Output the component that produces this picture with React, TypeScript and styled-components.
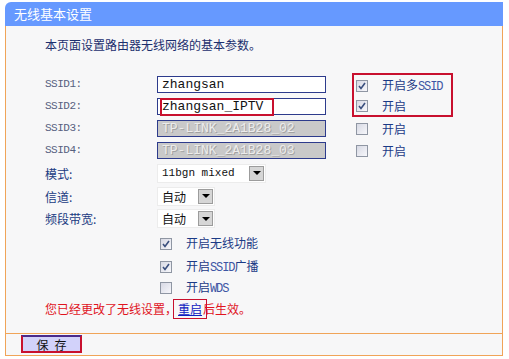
import React from 'react';
import styled, { createGlobalStyle } from 'styled-components';

const GlobalStyle = createGlobalStyle`
  body {
    margin: 0;
    background: #ffffff;
    font-family: "Noto Sans CJK SC", "Liberation Sans", sans-serif;
    font-size: 12px;
  }
`;

const CJK = '"Noto Sans CJK SC", "Liberation Sans", sans-serif';
const MONO = '"Liberation Mono", "Noto Sans CJK SC", monospace';
const ORANGE = '#f0a458';
const MARK = '#c8102e';

const Panel = styled.div`
  margin: 2px 0 0 5px;
  width: 498px;
`;

const Header = styled.div`
  height: 24px;
  line-height: 24px;
  padding-left: 9px;
  background: #6699ff;
  border-radius: 6px 0 0 0;
  color: #ffffff;
  font-family: ${CJK};
  font-size: 13px;
`;

const Body = styled.div`
  height: 307px;
  box-sizing: border-box;
  padding: 9px 0 0 39px;
  background: #f7f7f8;
  border-left: 1px solid ${ORANGE};
  border-right: 1px solid ${ORANGE};
`;

const Intro = styled.div`
  height: 20px;
  line-height: 20px;
  color: #1c2f6e;
  font-family: ${CJK};
  font-size: 12px;
  margin-bottom: 18px;
`;

const Form = styled.div`
  display: grid;
  grid-template-columns: 112px 195px 110px;
  grid-template-rows: 22px 22px 22px 22px 24px 22px 23px 25px 21px 22px 21px;
  align-items: center;
`;

const Label = styled.div<{ $mono?: boolean }>`
  font-family: ${({ $mono }) => ($mono ? MONO : CJK)};
  font-size: ${({ $mono }) => ($mono ? '11px' : '12px')};
  letter-spacing: ${({ $mono }) => ($mono ? '-0.5px' : '0')};
  color: ${({ $mono }) => ($mono ? '#56607e' : '#203a82')};
`;

const Field = styled.div`
  position: relative;
  display: flex;
  align-items: center;
`;

const TextInput = styled.div<{ $disabled?: boolean }>`
  box-sizing: border-box;
  width: 169px;
  height: 17px;
  line-height: 15px;
  padding-left: 4px;
  border: 1px solid #2d3b8c;
  background: ${({ $disabled }) => ($disabled ? '#c9c9c9' : '#ffffff')};
  color: ${({ $disabled }) => ($disabled ? '#ececec' : '#111111')};
  text-shadow: ${({ $disabled }) => ($disabled ? '1px 1px 0 #a2a2a2' : 'none')};
  font-family: ${MONO};
  font-size: 13px;
  white-space: nowrap;
  overflow: hidden;
`;

const MarkBox = styled.div`
  position: absolute;
  left: 3px;
  top: 0;
  width: 114px;
  height: 18px;
  box-sizing: border-box;
  border: 2px solid ${MARK};
  pointer-events: none;
`;

const SelectBox = styled.div<{ $width: number }>`
  box-sizing: border-box;
  display: flex;
  align-items: center;
  width: ${({ $width }) => $width}px;
  height: 19px;
  background: #ffffff;
  border: 1px solid #ececec;
`;

const SelectText = styled.span<{ $mono?: boolean }>`
  padding-left: 4px;
  font-family: ${({ $mono }) => ($mono ? MONO : CJK)};
  font-size: ${({ $mono }) => ($mono ? '11px' : '12px')};
  color: #111111;
  white-space: nowrap;
`;

const Arrow = styled.span`
  box-sizing: border-box;
  margin-left: auto;
  margin-right: 1px;
  width: 15px;
  height: 15px;
  display: flex;
  align-items: center;
  justify-content: center;
  background: #d6d6d6;
  border: 1px solid #9c9c9c;
  &::after {
    content: '';
    border-left: 4px solid transparent;
    border-right: 4px solid transparent;
    border-top: 4px solid #000000;
  }
`;

const CheckGroup = styled.div`
  grid-row: 1 / span 2;
  grid-column: 3;
  align-self: stretch;
  box-sizing: border-box;
  width: 101px;
  border: 2px solid ${MARK};
  padding-left: 2px;
  display: grid;
  grid-template-rows: 1fr 1fr;
  align-items: center;
`;

const CheckRow = styled.div<{ $indent?: number }>`
  display: flex;
  align-items: center;
  gap: 14px;
  padding-left: ${({ $indent }) => $indent ?? 0}px;
`;

const Box = styled.span`
  box-sizing: border-box;
  width: 12px;
  height: 12px;
  margin-top: 2px;
  display: inline-flex;
  align-items: center;
  justify-content: center;
  border: 1px solid #8f96a3;
  background: linear-gradient(135deg, #d7d9e4 0%, #f7f7fb 100%);
`;

const CheckText = styled.span`
  font-family: ${CJK};
  font-size: 12px;
  color: #1b3a86;
  white-space: nowrap;
`;

const Small = styled.span`
  font-family: ${MONO};
  font-size: 12px;
  letter-spacing: -1.1px;
  color: #3d55a4;
`;

const Message = styled.div`
  grid-column: 1 / -1;
  font-family: ${CJK};
  font-size: 12px;
  color: #e0141e;
  display: flex;
  align-items: center;
`;

const Reboot = styled.span`
  box-sizing: border-box;
  height: 20px;
  line-height: 18px;
  margin: 0 -4px 0 -4px;
  padding: 0 4px;
  border: 1px solid ${MARK};
  color: #1020c0;
  text-decoration: underline;
`;

const Footer = styled.div`
  box-sizing: border-box;
  height: 23px;
  padding: 1px 0 0 15px;
  border: 1px solid ${ORANGE};
  background: #f7f7f8;
`;

const SaveButton = styled.div`
  box-sizing: border-box;
  width: 61px;
  height: 18px;
  line-height: 15px;
  text-align: center;
  background: #d2d2fa;
  border: 2px solid ${MARK};
  border-top-color: #4a2a8a;
  font-family: ${CJK};
  font-size: 12px;
  color: #111111;
  letter-spacing: 6px;
  padding-left: 6px;
`;

const Check: React.FC<{ checked?: boolean }> = ({ checked }) => (
  <Box>
    {checked && (
      <svg width="8" height="8" viewBox="0 0 8 8">
        <path d="M1 4 L3 6.5 L7 1" fill="none" stroke="#3a4f7e" strokeWidth="1.6" />
      </svg>
    )}
  </Box>
);

const Select: React.FC<{ width: number; value: string; mono?: boolean }> = ({ width, value, mono }) => (
  <SelectBox $width={width}>
    <SelectText $mono={mono}>{value}</SelectText>
    <Arrow />
  </SelectBox>
);

const App: React.FC = () => (
  <>
    <GlobalStyle />
    <Panel>
      <Header>无线基本设置</Header>
      <Body>
        <Intro>本页面设置路由器无线网络的基本参数。</Intro>
        <Form>
          <Label $mono>SSID1:</Label>
          <Field>
            <TextInput>zhangsan</TextInput>
          </Field>
          <CheckGroup>
            <CheckRow>
              <Check checked />
              <CheckText>开启多<Small>SSID</Small></CheckText>
            </CheckRow>
            <CheckRow>
              <Check checked />
              <CheckText>开启</CheckText>
            </CheckRow>
          </CheckGroup>

          <Label $mono>SSID2:</Label>
          <Field>
            <TextInput>zhangsan_IPTV</TextInput>
            <MarkBox />
          </Field>

          <Label $mono>SSID3:</Label>
          <Field>
            <TextInput $disabled>TP-LINK_2A1B28_02</TextInput>
          </Field>
          <CheckRow $indent={4}>
            <Check />
            <CheckText>开启</CheckText>
          </CheckRow>

          <Label $mono>SSID4:</Label>
          <Field>
            <TextInput $disabled>TP-LINK_2A1B28_03</TextInput>
          </Field>
          <CheckRow $indent={4}>
            <Check />
            <CheckText>开启</CheckText>
          </CheckRow>

          <Label>模式:</Label>
          <Field>
            <Select width={109} value="11bgn mixed" mono />
          </Field>
          <div />

          <Label>信道:</Label>
          <Field>
            <Select width={58} value="自动" />
          </Field>
          <div />

          <Label>频段带宽:</Label>
          <Field>
            <Select width={58} value="自动" />
          </Field>
          <div />

          <div />
          <CheckRow $indent={3}>
            <Check checked />
            <CheckText>开启无线功能</CheckText>
          </CheckRow>
          <div />

          <div />
          <CheckRow $indent={3}>
            <Check checked />
            <CheckText>开启<Small>SSID</Small>广播</CheckText>
          </CheckRow>
          <div />

          <div />
          <CheckRow $indent={3}>
            <Check />
            <CheckText>开启<Small>WDS</Small></CheckText>
          </CheckRow>
          <div />

          <Message>
            您已经更改了无线设置，<Reboot>重启</Reboot>后生效。
          </Message>
        </Form>
      </Body>
      <Footer>
        <SaveButton>保存</SaveButton>
      </Footer>
    </Panel>
  </>
);

export default App;
